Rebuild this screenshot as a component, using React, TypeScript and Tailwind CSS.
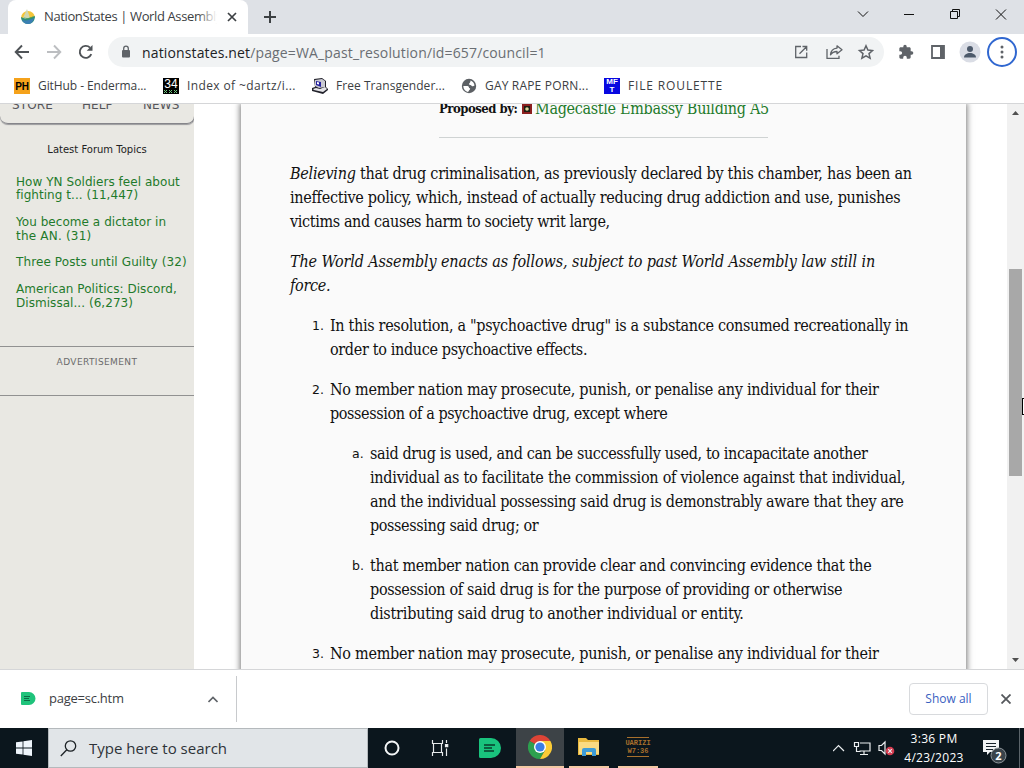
import clsx from "clsx";
import React from "react";

const ui = "font-['Comic_Sans_MS','Open_Sans',sans-serif]";
const serif = "font-['Droid_Serif','DejaVu_Serif_Condensed','DejaVu_Serif',serif]";
const verdana = "font-['Verdana','DejaVu_Sans',sans-serif]";

type Line = { text: string; className?: string };

const forumTopics: Line[][] = [
  [
    { text: "How YN Soldiers feel about", className: "tracking-[0.05px]" },
    { text: "fighting t... (11,447)", className: "tracking-[0.05px]" },
  ],
  [
    { text: "You become a dictator in", className: "tracking-[0.05px]" },
    { text: "the AN. (31)", className: "tracking-[0.2px]" },
  ],
  [{ text: "Three Posts until Guilty (32)", className: "tracking-[0.11px]" }],
  [
    { text: "American Politics: Discord,", className: "tracking-[0.05px]" },
    { text: "Dismissal... (6,273)", className: "tracking-[0.05px]" },
  ],
];

const clauseOne: Line[] = [
  {
    text: 'In this resolution, a "psychoactive drug" is a substance consumed recreationally in',
    className: "tracking-[-0.32px]",
  },
  { text: "order to induce psychoactive effects.", className: "tracking-[-0.34px]" },
];

const clauseTwo: Line[] = [
  {
    text: "No member nation may prosecute, punish, or penalise any individual for their",
    className: "tracking-[-0.27px]",
  },
  { text: "possession of a psychoactive drug, except where", className: "tracking-[-0.39px]" },
];

const clauseTwoA: Line[] = [
  {
    text: "said drug is used, and can be successfully used, to incapacitate another",
    className: "tracking-[-0.37px]",
  },
  {
    text: "individual as to facilitate the commission of violence against that individual,",
    className: "tracking-[-0.26px]",
  },
  {
    text: "and the individual possessing said drug is demonstrably aware that they are",
    className: "tracking-[-0.33px]",
  },
  { text: "possessing said drug; or", className: "tracking-[-0.38px]" },
];

const clauseTwoB: Line[] = [
  {
    text: "that member nation can provide clear and convincing evidence that the",
    className: "tracking-[-0.32px]",
  },
  {
    text: "possession of said drug is for the purpose of providing or otherwise",
    className: "tracking-[-0.32px]",
  },
  { text: "distributing said drug to another individual or entity.", className: "tracking-[-0.22px]" },
];

const clauseThree: Line[] = [
  {
    text: "No member nation may prosecute, punish, or penalise any individual for their",
    className: "tracking-[-0.27px]",
  },
];

export default function App() {
  return (
    <div className="flex h-[768px] w-[1024px] flex-col overflow-hidden bg-white">
      <TabStrip />
      <Toolbar />
      <BookmarkBar />
      <main className="flex h-[565px] shrink-0 overflow-hidden">
        <Sidebar />
        <Resolution />
        <Scrollbar />
      </main>
      <DownloadBar />
      <Taskbar />
    </div>
  );
}

function TabStrip() {
  return (
    <div className={clsx(ui, "flex h-[34px] shrink-0 bg-[#dee1e6] pl-2 text-[#3c4043]")}>
      <div className="flex w-60 items-center rounded-t-lg bg-white pl-3">
        <svg width="16" height="16" viewBox="0 0 16 16">
          <path d="M1 9a7 7 0 0 1 14 0z" fill="#f3c53a" />
          <path d="M3 9 7 0l3 9z" fill="#cfd6b0" />
          <path d="M1 8c3 2 7 2 14-1 0 5-3 8-7 8S1 12 1 8z" fill="#2f8f7a" />
          <path d="M2 11c4 1 8 0 12-2-1 4-3 6-6 6s-5-2-6-4z" fill="#3b7fb4" />
          <path d="M3 8c3 2 7 1 11-1-2 3-8 4-11 1z" fill="#55a04e" />
        </svg>
        <div className="relative ml-2 w-[173px] overflow-hidden text-[13px] tracking-[-0.38px] whitespace-nowrap">
          NationStates | World Assembly
          <div className="absolute inset-y-0 right-0 w-5 bg-gradient-to-r from-white/0 to-white" />
        </div>
        <svg className="ml-[10px]" width="10" height="10" viewBox="0 0 10 10" stroke="#3c4043" strokeWidth="1.7">
          <path d="M1 1l8 8M9 1l-8 8" />
        </svg>
      </div>
      <svg className="mt-[11px] ml-4" width="12" height="12" viewBox="0 0 12 12" stroke="#3c4043" strokeWidth="2">
        <path d="M6 0v12M0 6h12" />
      </svg>
      <svg className="ml-auto" width="170" height="34" viewBox="0 0 170 34" fill="none" stroke="#111" strokeWidth="1">
        <path d="M4 11.5l5 5 5-5M50 14.5h10" />
        <path d="M96.500 11.500h7v7h-7zM98.500 11.500v-2h7v7h-2M142 9.500l10 10M152 9.500l-10 10" />
      </svg>
    </div>
  );
}

function Toolbar() {
  return (
    <div className="flex h-9 shrink-0 items-center bg-white pl-[14px] text-[#5f6368]">
      <svg width="80" height="20" viewBox="0 0 80 20" fill="none" strokeWidth="1.9">
        <path d="M15 10H2M8 3.500L1.700 10 8 16.500" stroke="#4f5357" />
        <path d="M33 10h13M40 3.500l6.300 6.500L40 16.500" stroke="#bcbec1" />
        <path d="M77.300 12.200A6 6 0 1 1 76 5.600" stroke="#4f5357" />
        <path d="M78.500 3v5.800h-5.800z" fill="#4f5357" stroke="none" />
      </svg>
      <div className="ml-[14px] flex h-[30px] w-[776px] items-center rounded-full bg-[#f1f3f4] pl-[13px]">
        <svg width="10" height="14" viewBox="0 0 10 14">
          <rect x="1" y="5" width="8" height="7.500" rx="1" fill="#5f6368" />
          <path d="M2.700 5V3.500a2.300 2.300 0 0 1 4.600 0V5" fill="none" stroke="#5f6368" strokeWidth="1.300" />
        </svg>
        <div className={clsx(ui, "mt-px ml-[11px] text-[14px] tracking-[0.14px] whitespace-nowrap text-[#6a6e73]")}>
          <span className="text-[#202124]">nationstates.net</span>
          <span>/page=WA_past_resolution/id=657/council=1</span>
        </div>
        <svg className="mr-[10px] ml-auto" width="80" height="16" viewBox="0 0 80 16" fill="none" stroke="#5f6368" strokeWidth="1.300">
          <path d="M7 2.500H1.700v11h11V8.500M8.500 2.500h4.200v4.200M12.500 2.700L5.500 9.700" />
          <path d="M33 5v9.300h12v-2.500" />
          <path d="M43 1.800l5 4-5 4V7.500c-3.500 0-5 1-6.500 3.300.3-4 2.500-6.300 6.500-6.700z" strokeLinejoin="round" />
          <path d="M72 1.800l1.900 4.300 4.600.4-3.500 3.100 1.100 4.600L72 11.800l-4.100 2.400L69 9.600l-3.500-3.100 4.600-.4z" strokeWidth="1.500" />
        </svg>
      </div>
      <svg className="ml-[14px]" width="16" height="16" viewBox="0 0 24 24" fill="#5f6368">
        <path d="M20.500 11H19V7c0-1.100-.9-2-2-2h-4V3.500a2.500 2.500 0 0 0-5 0V5H4c-1.100 0-2 .9-2 2v3.800h1.500a2.700 2.700 0 0 1 0 5.400H2V20c0 1.100.9 2 2 2h3.800v-1.500a2.700 2.700 0 0 1 5.400 0V22H17c1.100 0 2-.9 2-2v-4h1.500a2.500 2.500 0 0 0 0-5z" />
      </svg>
      <svg className="ml-[17px]" width="14" height="14" viewBox="0 0 14 14">
        <path d="M1 1h12v12H1z" fill="none" stroke="#5f6368" strokeWidth="1.800" />
        <path d="M9 1h4v12H9z" fill="#5f6368" />
      </svg>
      <svg className="ml-[14px]" width="22" height="22" viewBox="0 0 22 22">
        <circle cx="11" cy="11" r="10.500" fill="#dadde5" />
        <circle cx="11" cy="8" r="3" fill="#4d5a6b" />
        <path d="M5 16.500c0-3 3-4.500 6-4.500s6 1.500 6 4.500z" fill="#4d5a6b" />
      </svg>
      <svg className="ml-[5px]" width="32" height="32" viewBox="0 0 32 32">
        <circle cx="16" cy="16" r="14" fill="none" stroke="#3067d0" strokeWidth="2" />
        <circle cx="16" cy="11" r="1.500" fill="#5f6368" />
        <circle cx="16" cy="16" r="1.500" fill="#5f6368" />
        <circle cx="16" cy="21" r="1.500" fill="#5f6368" />
      </svg>
    </div>
  );
}

function BookmarkBar() {
  return (
    <div className={clsx(ui, "flex h-[34px] shrink-0 items-center border-b border-[#d5d6d8] bg-white pb-px pl-[14px] text-[12px] text-[#3c4043]")}>
      <Bookmark title="GitHub - Enderma..." className="w-[149px] tracking-[-0.08px]">
        <div className="flex h-4 w-4 items-center justify-center bg-[#f5a21b] font-['Liberation_Sans',sans-serif] text-[10px] font-bold text-black">
          PH
        </div>
      </Bookmark>
      <Bookmark title="Index of ~dartz/i..." className="w-[149px] tracking-[0.38px]">
        <div className="flex h-4 w-4 flex-col items-center bg-black font-['Liberation_Sans',sans-serif] text-[12px] leading-[12px] tracking-normal text-white">
          34
          <svg width="14" height="4" viewBox="0 0 14 4" stroke="#6fc57c" strokeWidth="1">
            <path d="M0 0l3 3M3 0L0 3M5 0l3 3M8 0L5 3M10 0l3 3M13 0l-3 3" />
          </svg>
        </div>
      </Bookmark>
      <Bookmark title="Free Transgender..." className="w-[149px] tracking-[0.05px]">
        <svg width="16" height="16" viewBox="0 0 16 16">
          <path d="M2 1l8-1 4 3v6l2 2v1l-5 4-11-3v-3l3-1z" fill="#22222b" />
          <path d="M3 2l7-1 3 2v6l-6 1-4-2z" fill="#c9c9d2" />
          <path d="M4 3l5 1v5L4 7z" fill="#2521a0" />
          <path d="M5 4l2 .5v2L5 6z" fill="#fff" />
          <path d="M1 11l3-1 4 1 5-2 2 2-4 3-9-2z" fill="#e4e4e8" />
        </svg>
      </Bookmark>
      <Bookmark title="GAY RAPE PORN..." className="w-[143px] tracking-[0.18px]">
        <svg width="16" height="16" viewBox="0 0 16 16">
          <circle cx="8" cy="8" r="7.200" fill="#5c6064" />
          <path d="M9.500 2.500c2 .5 3.800 2.500 4 5-1 .8-2 1-3 .2-.3-1-2-.6-2.500-1.500 0-1 1.500-1 1.500-3.700zM2.300 8h4.200c1.200 0 1.500 1 1.500 2 1.500 0 1.500 1.500.3 2-.3.800-.8 1.200-1.300 1.900C4.500 13.500 2.300 11.500 2.300 8z" fill="#fff" />
        </svg>
      </Bookmark>
      <Bookmark title="FILE ROULETTE" className="tracking-[0.85px]">
        <div className="flex h-4 w-4 flex-col items-center bg-[#0808e0] font-['Liberation_Sans',sans-serif] text-[8px] leading-[8px] font-bold tracking-normal text-white">
          <span>MF</span>
          <span>T</span>
        </div>
      </Bookmark>
    </div>
  );
}

function Bookmark({ title, className, children }: { title: string; className?: string; children: React.ReactNode }) {
  return (
    <div className={clsx("flex shrink-0 items-center gap-2 whitespace-nowrap", className)}>
      {children}
      <span>{title}</span>
    </div>
  );
}

function Lines({ lines }: { lines: Line[] }) {
  return (
    <>
      {lines.map((line) => (
        <span key={line.text} className={clsx("block whitespace-nowrap", line.className)}>
          {line.text}
        </span>
      ))}
    </>
  );
}

function Sidebar() {
  return (
    <aside className={clsx(verdana, "flex w-[194px] shrink-0 flex-col bg-[#e9e8e3]")}>
      <div className="flex h-5 w-[195px] items-start rounded-b-lg border-r border-b border-[#85858a] pl-3 text-[12px] leading-[12px] tracking-[0.1px] text-[#55555a] shadow-[0_1px_1px_#99999c]">
        <span className="-mt-[5px] w-[70px]">STORE</span>
        <span className="-mt-[5px] w-[61px]">HELP</span>
        <span className="-mt-[5px]">NEWS</span>
      </div>
      <h3 className="mt-5 text-center text-[10px] leading-[12px] text-[#222]">Latest Forum Topics</h3>
      <ul className="mt-[20px] flex flex-col gap-[13.4px] pl-4 text-[12px] leading-[13.4px] text-[#1f7a2b]">
        {forumTopics.map((topic) => (
          <li key={topic[0].text}>
            <Lines lines={topic} />
          </li>
        ))}
      </ul>
      <div className="mt-9 h-[50px] border-y border-[#919191] pt-[9px] text-center text-[9px] leading-[12px] tracking-[0.4px] text-[#6b6b6b]">
        ADVERTISEMENT
      </div>
    </aside>
  );
}

function Resolution() {
  return (
    <div className="flex-1 bg-white pr-[41px] pl-[47px]">
      <article className={clsx(serif, "h-[570px] bg-[#fafafa] pl-[49px] text-[16px] leading-6 text-[#111] shadow-[0_0_6px_1px_#777]")}>
        <header className="ml-[149px] flex h-[34px] w-[329px] items-start border-b border-[#cfd3d3]">
          <div className="-mt-[7px] flex items-center whitespace-nowrap">
            <b className="w-[83px] text-[13px] tracking-[-0.5px]">Proposed by:</b>
            <svg width="10" height="10" viewBox="0 0 10 10">
              <path d="M0 0h10v10H0z" fill="#8b1f1f" />
              <path d="M2 2h6v6H2z" fill="#1c1c12" />
              <circle cx="5" cy="5" r="1.800" fill="#d8d79a" />
            </svg>
            <span className="ml-[3px] tracking-[-0.32px] text-[#1f7a2b]">Magecastle Embassy Building A5</span>
          </div>
        </header>
        <p className="mt-6 whitespace-nowrap">
          <span className="block tracking-[-0.27px]">
            <i>Believing</i> that drug criminalisation, as previously declared by this chamber, has been an
          </span>
          <span className="block tracking-[-0.28px]">
            ineffective policy, which, instead of actually reducing drug addiction and use, punishes
          </span>
          <span className="block tracking-[-0.36px]">victims and causes harm to society writ large,</span>
        </p>
        <p className="mt-4 whitespace-nowrap italic">
          <span className="block tracking-[-0.13px]">
            The World Assembly enacts as follows, subject to past World Assembly law still in
          </span>
          <span className="block tracking-[-0.3px]">force.</span>
        </p>
        <ol className="mt-4 flex flex-col gap-4 pl-10">
          <Clause marker="1." lines={clauseOne} />
          <Clause marker="2." lines={clauseTwo}>
            <ol className="mt-4 flex flex-col gap-4 pl-10">
              <Clause marker="a." lines={clauseTwoA} />
              <Clause marker="b." lines={clauseTwoB} />
            </ol>
          </Clause>
          <Clause marker="3." lines={clauseThree} />
        </ol>
      </article>
    </div>
  );
}

function Clause({ marker, lines, children }: { marker: string; lines: Line[]; children?: React.ReactNode }) {
  return (
    <li className="flex">
      <span className={clsx(verdana, "-ml-[18px] w-[18px] shrink-0 text-[12.5px]")}>{marker}</span>
      <div>
        <Lines lines={lines} />
        {children}
      </div>
    </li>
  );
}

function Scrollbar() {
  return (
    <div className="relative flex w-[17px] shrink-0 flex-col items-center bg-[#f1f1f1]">
      <svg className="mt-[7px]" width="7" height="4" viewBox="0 0 7 4">
        <path d="M0 4l3.500-4L7 4z" fill="#505050" />
      </svg>
      <div className="mt-[154px] h-[207px] w-[13px] bg-[#a8a8a8]" />
      <svg className="mt-auto mb-[7px]" width="7" height="4" viewBox="0 0 7 4">
        <path d="M0 0l3.500 4L7 0z" fill="#505050" />
      </svg>
      <div className="absolute top-[294px] right-0 h-[17px] w-[2px] border-y border-l border-black bg-white" />
    </div>
  );
}

function DownloadBar() {
  return (
    <div className={clsx(ui, "flex h-[59px] shrink-0 items-center border-t border-[#d5d6d8] bg-white text-[13px] text-[#3c4043]")}>
      <div className="flex h-[46px] w-[237px] items-center border-r border-[#c8cacd] pl-5">
        <svg width="16" height="16" viewBox="0 0 16 16">
          <path d="M2 1h7a6.500 6.500 0 0 1 0 13H2a1 1 0 0 1-1-1V2a1 1 0 0 1 1-1z" fill="#1fc37b" />
          <path d="M4 5.500h6M4 7.500h5M4 9.500h6" stroke="#0c6b45" />
        </svg>
        <span className="ml-[13px] tracking-[-0.25px]">page=sc.htm</span>
        <svg className="mr-[18px] ml-auto" width="10" height="7" viewBox="0 0 10 7" fill="none" stroke="#5f6368" strokeWidth="1.600">
          <path d="M.5 6L5 1.500 9.500 6" />
        </svg>
      </div>
      <button className="ml-auto h-8 w-[79px] rounded border border-[#d8dadd] text-[12px] text-[#3a5fbf]">Show all</button>
      <svg className="mr-[13px] ml-[13px]" width="10" height="10" viewBox="0 0 10 10" stroke="#55585c" strokeWidth="1.800">
        <path d="M.5.5l9 9M9.500.5l-9 9" />
      </svg>
    </div>
  );
}

function Taskbar() {
  return (
    <div className={clsx(ui, "flex h-10 shrink-0 bg-[#0b161d] text-white")}>
      <div className="flex w-12 items-center justify-center">
        <svg width="16" height="16" viewBox="0 0 16 16" fill="#eef5fb">
          <path d="M0 2.300L6.600 1.400v6.200H0zM7.400 1.300L16 0v7.600H7.400zM0 8.400h6.600v6.200L0 13.700zM7.400 8.400H16V16l-8.600-1.300z" />
        </svg>
      </div>
      <div className="flex w-80 items-center border border-[#b4b9bc] bg-[#e1e5e8] pl-[11px] text-[15px] text-[#2e3338]">
        <svg width="17" height="17" viewBox="0 0 17 17" fill="none" stroke="#1d2226" strokeWidth="1.300">
          <circle cx="10.500" cy="6" r="5.200" />
          <path d="M6.800 9.800L.8 16" />
        </svg>
        <span className="ml-3">Type here to search</span>
      </div>
      <div className="flex w-12 items-center justify-center">
        <svg width="16" height="16" viewBox="0 0 16 16">
          <circle cx="8" cy="8" r="6.500" fill="none" stroke="#f4f6f7" strokeWidth="2" />
        </svg>
      </div>
      <div className="flex w-12 items-center justify-center">
        <svg width="18" height="16" viewBox="0 0 18 16" fill="none" stroke="#e6e9ea" strokeWidth="1.200">
          <path d="M1.500 0v3.500h10V0M1.500 16v-3.500h10V16M2.500 3.500v9M10.500 3.500v9M15.500 0v3M15.500 8.500V16" />
          <path d="M14.500 4.500h2.200v2.200h-2.200z" fill="#fff" />
        </svg>
      </div>
      <div className="flex w-[52px] items-center justify-center">
        <svg width="22" height="20" viewBox="0 0 22 20">
          <path d="M1.500 0H12a10 10 0 0 1 0 20H1.500A1.500 1.500 0 0 1 0 18.500v-17A1.500 1.500 0 0 1 1.500 0z" fill="#19c37d" />
          <path d="M5 7h11M5 10h8M5 13h10" stroke="#083c2b" strokeWidth="1.500" />
        </svg>
      </div>
      <div className="flex w-12 items-center justify-center border-b-2 border-[#f3c9a4] bg-[#3d4347]">
        <svg width="24" height="24" viewBox="0 0 24 24">
          <path d="M12 12L1.600 6A12 12 0 0 1 22.400 6z" fill="#dd4436" />
          <path d="M12 12L1.600 6A12 12 0 0 0 12 24l5.200-9z" fill="#2da04f" />
          <path d="M12 6h10.400A12 12 0 0 1 12 24l5.200-9z" fill="#fbcb36" />
          <circle cx="12" cy="12" r="6" fill="#fff" />
          <circle cx="12" cy="12" r="4.600" fill="#3b7de4" />
        </svg>
      </div>
      <div className="ml-[5px] flex w-10 items-center justify-center border-b-2 border-[#f3c9a4]">
        <svg width="22" height="20" viewBox="0 0 22 20">
          <path d="M0 1h8l2 2h11v15H0z" fill="#e9b93f" />
          <path d="M1 5h20v12H1z" fill="#fadb82" />
          <path d="M4 19v-6a2 2 0 0 1 2-2h10a2 2 0 0 1 2 2v6h-4v-4H8v4z" fill="#3e9cd6" />
        </svg>
      </div>
      <div className="ml-[9px] flex w-10 flex-col items-center border-b-2 border-[#f3c9a4] pt-[9px] font-['Liberation_Mono',monospace] text-[#a8702c]">
        <div className="flex h-5 w-[22px] flex-col items-center justify-center border-y border-[#a8702c] text-[7px] leading-[8px] font-bold">
          <span>UARIZI</span>
          <span>W7:36</span>
        </div>
      </div>
      <div className="ml-auto flex items-center">
        <svg width="62" height="16" viewBox="0 0 62 16" fill="none" stroke="#eceff1" strokeWidth="1.200">
          <path d="M0 11l5.500-5.500L11 11" />
          <path d="M27 3h10v8H26.500M21.500 2.500h4v4h-4zM23.500 6.500v5h4M31 11v3M27 14.500h8" />
          <path d="M46 5.500h2.500L52 2v12l-3.500-3.500H46z" />
          <circle cx="57" cy="11" r="4.300" fill="#d43c50" stroke="none" />
          <path d="M55.200 9.200l3.600 3.600M58.800 9.200l-3.600 3.600" />
        </svg>
        <div className="ml-[7px] flex w-[64px] flex-col items-center text-[12px] leading-[19px] tracking-[0.3px] whitespace-nowrap">
          <span>3:36 PM</span>
          <span>4/23/2023</span>
        </div>
        <svg className="mt-[6px] ml-[17px]" width="25" height="26" viewBox="0 0 25 26">
          <path d="M0 2h16v12H7l-3 3v-3H0z" fill="#f1f3f4" />
          <path d="M3 5.500h10M3 8.500h10M3 11.500h7" stroke="#17222a" />
          <circle cx="15.500" cy="17.500" r="7.500" fill="#39434a" stroke="#8c9499" />
          <text x="15.500" y="21.500" textAnchor="middle" fontSize="11" fontWeight="bold" fill="#fff">2</text>
        </svg>
        <div className="ml-[11px] h-10 w-[5px] border-l border-[#5b646a]" />
      </div>
    </div>
  );
}
